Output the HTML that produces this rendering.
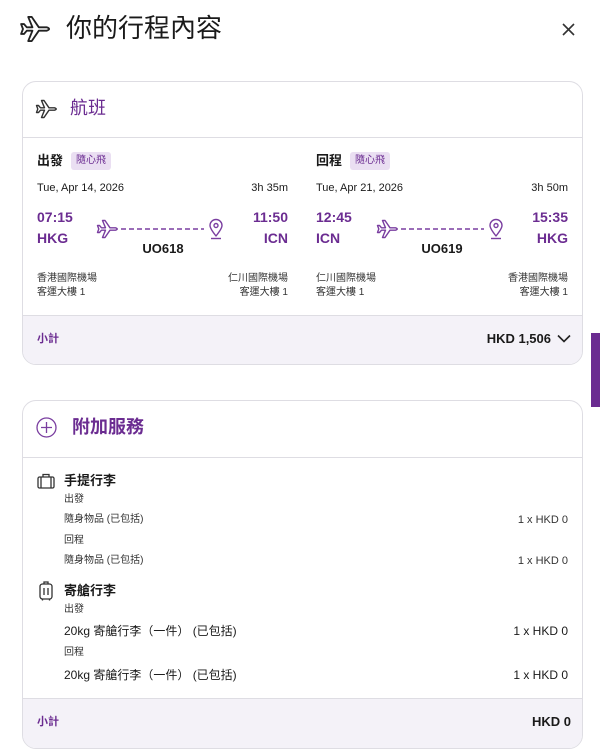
<!DOCTYPE html>
<html><head><meta charset="utf-8"><style>
*{margin:0;padding:0;box-sizing:border-box}
body{width:600px;height:753px;background:#fff;position:relative;overflow:hidden;font-family:"Liberation Sans","Noto Sans CJK TC",sans-serif;color:#1a1a1a}
.a{position:absolute;white-space:nowrap;line-height:20px}
.r{text-align:right}
.p{color:#6b2c91}
.b{font-weight:bold}
.g{color:#333}
.card{position:absolute;left:22px;width:561px;border:1px solid #dedde3;border-radius:14px;overflow:hidden;background:#fff}
.foot{position:absolute;left:0;right:0;bottom:0;background:#f4f2f8;border-top:1px solid #dedde3}
.hl{position:absolute;left:0;right:0;border-top:1px solid #dedde3}
.badge{position:absolute;height:18px;line-height:18px;padding:0 5px;background:#eadff2;color:#6b2c91;font-size:10px;border-radius:3px}
</style></head><body>
<svg class="a" style="left:19px;top:12px" width="34" height="34" viewBox="0 0 24 24" fill="none" stroke="#222" stroke-width="1.3" stroke-linejoin="round"><path d="M1.5 8.5L3.5 8.5 5.5 10.8 9.5 10.8 6.5 3.5 9 3.5 14 10.8 19.5 10.8Q23 12 19.5 13.2L14 13.2 9 20.5 6.5 20.5 9.5 13.2 5.5 13.2 3.5 15.5 1.5 15.5 2.8 12Z"/></svg>
<div class="a" style="left:66px;top:13px;font-size:26px;line-height:30px">你的行程內容</div>
<svg class="a" style="left:562px;top:23px" width="13" height="13" viewBox="0 0 13 13" stroke="#333" stroke-width="1.6"><path d="M1 1L12 12M12 1L1 12"/></svg>
<div style="position:absolute;left:591px;top:333px;width:9px;height:74px;background:#6b2c91"></div>

<div class="card" style="top:81px;height:284px">
 <div class="hl" style="top:55px"></div>
 <div class="foot" style="height:49px"></div>
</div>
<svg class="a" style="left:35px;top:97px" width="24" height="24" viewBox="0 0 24 24" fill="none" stroke="#333" stroke-width="1.4" stroke-linejoin="round"><path d="M1.5 8.5L3.5 8.5 5.5 10.8 9.5 10.8 6.5 3.5 9 3.5 14 10.8 19.5 10.8Q23 12 19.5 13.2L14 13.2 9 20.5 6.5 20.5 9.5 13.2 5.5 13.2 3.5 15.5 1.5 15.5 2.8 12Z"/></svg>
<div class="a p" style="left:70px;top:96px;font-size:18px;line-height:24px">航班</div>

<div class="a b" style="left:37px;top:151px;font-size:13px">出發</div>
<div class="badge" style="left:71px;top:152px">隨心飛</div>
<div class="a" style="left:37px;top:178px;font-size:11px">Tue, Apr 14, 2026</div>
<div class="a r" style="left:188px;width:100px;top:178px;font-size:11px">3h 35m</div>
<div class="a b p" style="left:37px;top:207px;font-size:14px">07:15</div>
<div class="a b p" style="left:37px;top:228px;font-size:14px">HKG</div>
<div class="a b p r" style="left:188px;width:100px;top:207px;font-size:14px">11:50</div>
<div class="a b p r" style="left:188px;width:100px;top:228px;font-size:14px">ICN</div>
<svg class="a" style="left:96px;top:217px" width="130" height="26" viewBox="0 0 130 26" fill="none" stroke="#7a3ea0" stroke-width="1.4" stroke-linejoin="round"><path d="M1.5 8.5L3.5 8.5 5.5 10.8 9.5 10.8 6.5 3.5 9 3.5 14 10.8 19.5 10.8Q23 12 19.5 13.2L14 13.2 9 20.5 6.5 20.5 9.5 13.2 5.5 13.2 3.5 15.5 1.5 15.5 2.8 12Z"/><path d="M25 12H108" stroke-dasharray="5 3" stroke-width="1.6"/><path d="M120 19C116 14 114 11 114 8.5A6 6 0 0 1 126 8.5C126 11 124 14 120 19Z"/><circle cx="120" cy="8.5" r="2"/><path d="M115 21.5H125"/></svg>
<div class="a b" style="left:113px;width:100px;text-align:center;top:239px;font-size:13px">UO618</div>
<div class="a g" style="left:37px;top:269px;font-size:10px">香港國際機場</div>
<div class="a g" style="left:37px;top:283px;font-size:10px">客運大樓 1</div>
<div class="a r g" style="left:188px;width:100px;top:269px;font-size:10px">仁川國際機場</div>
<div class="a r g" style="left:188px;width:100px;top:283px;font-size:10px">客運大樓 1</div>

<div class="a b" style="left:316px;top:151px;font-size:13px">回程</div>
<div class="badge" style="left:350px;top:152px">隨心飛</div>
<div class="a" style="left:316px;top:178px;font-size:11px">Tue, Apr 21, 2026</div>
<div class="a r" style="left:468px;width:100px;top:178px;font-size:11px">3h 50m</div>
<div class="a b p" style="left:316px;top:207px;font-size:14px">12:45</div>
<div class="a b p" style="left:316px;top:228px;font-size:14px">ICN</div>
<div class="a b p r" style="left:468px;width:100px;top:207px;font-size:14px">15:35</div>
<div class="a b p r" style="left:468px;width:100px;top:228px;font-size:14px">HKG</div>
<svg class="a" style="left:376px;top:217px" width="130" height="26" viewBox="0 0 130 26" fill="none" stroke="#7a3ea0" stroke-width="1.4" stroke-linejoin="round"><path d="M1.5 8.5L3.5 8.5 5.5 10.8 9.5 10.8 6.5 3.5 9 3.5 14 10.8 19.5 10.8Q23 12 19.5 13.2L14 13.2 9 20.5 6.5 20.5 9.5 13.2 5.5 13.2 3.5 15.5 1.5 15.5 2.8 12Z"/><path d="M25 12H108" stroke-dasharray="5 3" stroke-width="1.6"/><path d="M120 19C116 14 114 11 114 8.5A6 6 0 0 1 126 8.5C126 11 124 14 120 19Z"/><circle cx="120" cy="8.5" r="2"/><path d="M115 21.5H125"/></svg>
<div class="a b" style="left:392px;width:100px;text-align:center;top:239px;font-size:13px">UO619</div>
<div class="a g" style="left:316px;top:269px;font-size:10px">仁川國際機場</div>
<div class="a g" style="left:316px;top:283px;font-size:10px">客運大樓 1</div>
<div class="a r g" style="left:468px;width:100px;top:269px;font-size:10px">香港國際機場</div>
<div class="a r g" style="left:468px;width:100px;top:283px;font-size:10px">客運大樓 1</div>

<div class="a p b" style="left:37px;top:329px;font-size:11px">小計</div>
<div class="a b r" style="left:400px;width:151px;top:329px;font-size:13px">HKD 1,506</div>
<svg class="a" style="left:557px;top:334px" width="14" height="9" viewBox="0 0 14 9" fill="none" stroke="#222" stroke-width="1.6"><path d="M1 1.5L7 7.5 13 1.5"/></svg>

<div class="card" style="top:400px;height:349px">
 <div class="hl" style="top:56px"></div>
 <div class="foot" style="height:50px"></div>
</div>
<svg class="a" style="left:36px;top:417px" width="21" height="21" viewBox="0 0 21 21" fill="none" stroke="#7a3ea0" stroke-width="1.3"><circle cx="10.5" cy="10.5" r="9.5"/><path d="M10.5 5V16M5 10.5H16"/></svg>
<div class="a p b" style="left:72px;top:415px;font-size:18px;line-height:24px">附加服務</div>

<svg class="a" style="left:37px;top:473px" width="18" height="16" viewBox="0 0 18 16" fill="none" stroke="#333" stroke-width="1.3"><rect x="1" y="4" width="16" height="11" rx="1.5"/><path d="M6 4V1.5H12V4M4 4V15M14 4V15"/></svg>
<div class="a b" style="left:64px;top:471px;font-size:13px">手提行李</div>
<div class="a g" style="left:64px;top:490px;font-size:10px">出發</div>
<div class="a g" style="left:64px;top:510px;font-size:10px">隨身物品 (已包括)</div>
<div class="a r g" style="left:468px;width:100px;top:510px;font-size:11px">1 x HKD 0</div>
<div class="a g" style="left:64px;top:531px;font-size:10px">回程</div>
<div class="a g" style="left:64px;top:551px;font-size:10px">隨身物品 (已包括)</div>
<div class="a r g" style="left:468px;width:100px;top:551px;font-size:11px">1 x HKD 0</div>

<svg class="a" style="left:39px;top:581px" width="14" height="20" viewBox="0 0 14 20" fill="none" stroke="#333" stroke-width="1.3"><rect x="1" y="3" width="12" height="15" rx="2.5"/><path d="M5 3V1H9V3M5 7V14M9 7V14M3.5 18V19.5M10.5 18V19.5"/></svg>
<div class="a b" style="left:64px;top:581px;font-size:13px">寄艙行李</div>
<div class="a g" style="left:64px;top:600px;font-size:10px">出發</div>
<div class="a" style="left:64px;top:621px;font-size:12px">20kg 寄艙行李（一件） (已包括)</div>
<div class="a r" style="left:448px;width:120px;top:621px;font-size:12px">1 x HKD 0</div>
<div class="a g" style="left:64px;top:643px;font-size:10px">回程</div>
<div class="a" style="left:64px;top:665px;font-size:12px">20kg 寄艙行李（一件） (已包括)</div>
<div class="a r" style="left:448px;width:120px;top:665px;font-size:12px">1 x HKD 0</div>

<div class="a p b" style="left:37px;top:712px;font-size:11px">小計</div>
<div class="a b r" style="left:450px;width:121px;top:712px;font-size:13px">HKD 0</div>
</body></html>
